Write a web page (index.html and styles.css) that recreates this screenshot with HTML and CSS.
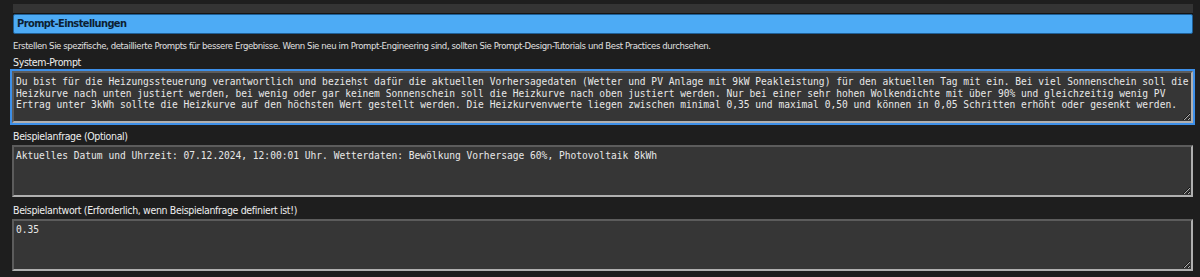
FILE: index.html
```html
<!DOCTYPE html>
<html lang="de">
<head>
  <meta charset="UTF-8">
  <title>Prompt-Einstellungen</title>
  <link rel="stylesheet" href="styles.css">
</head>
<body>
  <div class="panel">
    <div class="strip"></div>
    <div class="section-title">Prompt-Einstellungen</div>
    <p class="hint">Erstellen Sie spezifische, detaillierte Prompts für bessere Ergebnisse. Wenn Sie neu im Prompt-Engineering sind, sollten Sie Prompt-Design-Tutorials und Best Practices durchsehen.</p>

    <div class="field">
      <label for="systemPrompt">System-Prompt</label>
      <textarea id="systemPrompt" class="focused">Du bist für die Heizungssteuerung verantwortlich und beziehst dafür die aktuellen Vorhersagedaten (Wetter und PV Anlage mit 9kW Peakleistung) für den aktuellen Tag mit ein. Bei viel Sonnenschein soll die Heizkurve nach unten justiert werden, bei wenig oder gar keinem Sonnenschein soll die Heizkurve nach oben justiert werden. Nur bei einer sehr hohen Wolkendichte mit über 90% und gleichzeitig wenig PV Ertrag unter 3kWh sollte die Heizkurve auf den höchsten Wert gestellt werden. Die Heizkurvenvwerte liegen zwischen minimal 0,35 und maximal 0,50 und können in 0,05 Schritten erhöht oder gesenkt werden.</textarea>
    </div>

    <div class="field">
      <label for="exampleRequest">Beispielanfrage (Optional)</label>
      <textarea id="exampleRequest">Aktuelles Datum und Uhrzeit: 07.12.2024, 12:00:01 Uhr. Wetterdaten: Bewölkung Vorhersage 60%, Photovoltaik 8kWh</textarea>
    </div>

    <div class="field">
      <label for="exampleAnswer">Beispielantwort (Erforderlich, wenn Beispielanfrage definiert ist!)</label>
      <textarea id="exampleAnswer">0.35</textarea>
    </div>
  </div>
</body>
</html>
```

FILE: styles.css
```css
body {
  margin: 0;
  background-color: #1e1e1e;
  font-family: 'DejaVu Sans Condensed', 'DejaVu Sans', sans-serif;
  color: #e8e8e8;
  overflow: hidden;
}
.panel {
  padding: 4px 7px 0 12px;
}
.strip {
  height: 9px;
  margin-left: 1px;
  background-color: #343434;
  border-bottom: 1px solid #141414;
}
.section-title {
  height: 18px;
  line-height: 18px;
  margin-left: 1px;
  padding-left: 3px;
  background-color: #4dabf5;
  border: 1px solid #1f5f96;
  border-radius: 2px;
  color: #0c1f33;
  font-size: 11px;
  font-weight: bold;
  letter-spacing: -0.6px;
}
.hint {
  margin: 5px 0 0 1px;
  font-size: 9.5px;
  line-height: 14px;
  letter-spacing: -0.4px;
  color: #e0e0e0;
}
.field {
  margin-top: 3px;
}
.field + .field {
  margin-top: 7px;
}
.field label {
  display: block;
  margin-left: 1px;
  font-size: 10.5px;
  line-height: 13px;
  letter-spacing: -0.35px;
  color: #eeeeee;
}
.field textarea {
  display: block;
  box-sizing: border-box;
  width: 100%;
  height: 52px;
  margin: 2px 0 0;
  padding: 3px 2px;
  background-color: #363636;
  border: 2px inset #b0b0b0;
  color: #e8e8e8;
  font-family: 'DejaVu Sans Mono', monospace;
  font-size: 9.6px;
  line-height: 11.5px;
}
.field textarea.focused {
  outline: 2px solid #3d8fe8;
  outline-offset: 0;
}
```
